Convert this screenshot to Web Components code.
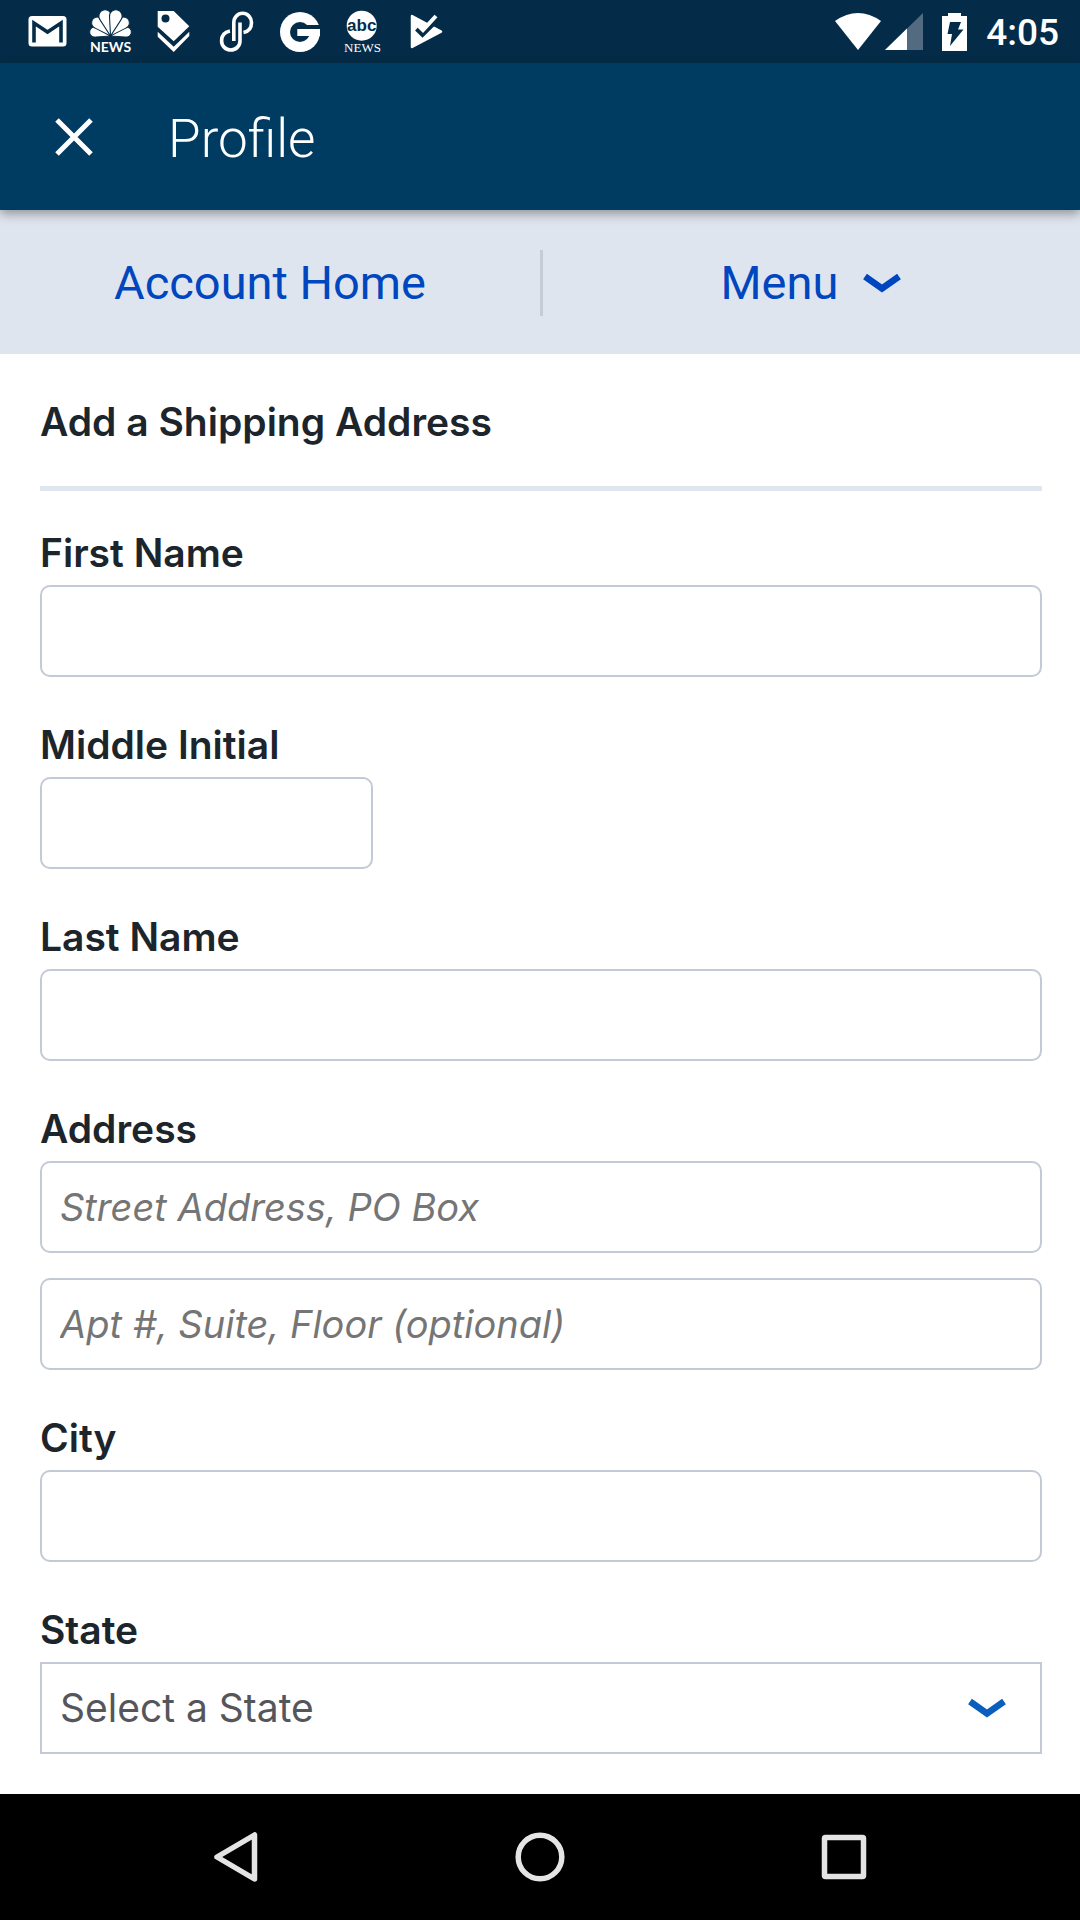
<!DOCTYPE html>
<html lang="en">
<head>
<meta charset="utf-8">
<meta name="viewport" content="width=device-width, initial-scale=1">
<title>Profile</title>
<style>
body { margin: 0; background: #fff; font-family: Inter, "Liberation Sans", sans-serif; color: #1d252c; }
</style>
</head>
<body>
<profile-screen></profile-screen>
<script>
const define = (name, html, setup) => customElements.define(name, class extends HTMLElement {
  constructor() {
    super();
    const t = document.createElement('template');
    t.innerHTML = html;
    this.attachShadow({ mode: 'open' }).append(t.content.cloneNode(true));
  }
  connectedCallback() { if (setup) setup(this, this.shadowRoot); }
});

define('status-bar', `
<style>
:host { display: flex; justify-content: space-between; align-items: center; height: 63px; padding: 0 21px 0 16px; background: #042c48; color: #fff; font: 500 37px/44px Roboto, sans-serif; }
div { display: flex; align-items: center; }
svg { display: block; flex: none; }
.sys { gap: 19px; }
.sys span { padding-top: 3px; }
.radio { gap: 4px; }
</style>
<div>
  <svg width="63" height="63" viewBox="0 0 63 63"><rect x="12.500" y="16" width="38" height="30.500" rx="3.500" fill="#fff"/><path d="M18 42.500V23L31.500 32 45 23V42.500" fill="none" stroke="#042c48" stroke-width="3.600"/></svg>
  <svg width="63" height="63" viewBox="0 0 63 63"><g fill="#fff" stroke="#042c48" stroke-width="1" transform="translate(31.500 36)"><path transform="rotate(-76) scale(.84)" d="M0 0L-5.500-17A6 6 0 1 1 5.500-17Z"/><path transform="rotate(76) scale(.84)" d="M0 0L-5.500-17A6 6 0 1 1 5.500-17Z"/><path transform="rotate(-45) scale(.96)" d="M0 0L-5.500-17A6 6 0 1 1 5.500-17Z"/><path transform="rotate(45) scale(.96)" d="M0 0L-5.500-17A6 6 0 1 1 5.500-17Z"/><path transform="rotate(-15) scale(1.060)" d="M0 0L-5.500-17A6 6 0 1 1 5.500-17Z"/><path transform="rotate(15) scale(1.060)" d="M0 0L-5.500-17A6 6 0 1 1 5.500-17Z"/></g><text x="31.500" y="52" text-anchor="middle" fill="#fff" font-family="Lato, sans-serif" font-weight="700" font-size="14">NEWS</text></svg>
  <svg width="63" height="63" viewBox="0 0 63 63"><path d="M15.700 11H31.700L47.300 26.300 31.700 41.300 15.700 26.700ZM15.700 31.700L31.700 46.700 47.300 31.700V36L31.700 52 15.700 36.700Z" fill="#fff"/><circle cx="23.500" cy="18.500" r="4" fill="#042c48"/></svg>
  <svg width="63" height="63" viewBox="0 0 63 63"><g fill="none" stroke="#fff" stroke-width="3.600"><path d="M28.800 41V22.500A8.600 9 0 0 1 46.500 22.500Q46.500 31 38.500 32.500"/><path d="M35 22.500V41A9.200 9 0 0 1 16.600 41Q16.600 32.500 25 31"/></g></svg>
  <svg width="63" height="63" viewBox="0 0 63 63"><circle cx="32" cy="32" r="20" fill="#fff"/><circle cx="32" cy="32" r="10" fill="#042c48"/><path d="M37 25H52.500V29H37Z" fill="#042c48"/><path d="M29.300 29H52V36H29.300Z" fill="#fff"/></svg>
  <svg width="63" height="63" viewBox="0 0 63 63"><circle cx="30.700" cy="25.700" r="15" fill="#fff"/><text x="30.700" y="30.500" text-anchor="middle" fill="#042c48" font-family="Liberation Sans, sans-serif" font-weight="700" font-size="17">abc</text><text x="31.500" y="52" text-anchor="middle" fill="#fff" font-family="Liberation Serif, serif" font-size="13">NEWS</text></svg>
  <svg width="63" height="63" viewBox="0 0 63 63"><path d="M18 16L47 31.700 18 47Z" fill="#fff" stroke="#fff" stroke-width="2.500" stroke-linejoin="round"/><path d="M34 10L48 12V26L34 24Z" fill="#042c48"/><path d="M22.500 29L28.500 35 44 19.500" fill="none" stroke="#042c48" stroke-width="4"/><path d="M25 26L29 30 42 16" fill="none" stroke="#fff" stroke-width="4"/></svg>
</div>
<div class="sys">
  <div class="radio">
    <svg width="46" height="37" viewBox="0 0 46 37"><path d="M0 8Q23-8 46 8L23 37Z" fill="#fff"/></svg>
    <svg width="38" height="37" viewBox="0 0 38 37"><path d="M38 0V37H0Z" fill="#526b80"/><path d="M22 15.500V37H0Z" fill="#fff"/></svg>
  </div>
  <svg width="25" height="38" viewBox="0 0 25 38"><path d="M6 0H19V3H25V38H0V3H6Z" fill="#fff"/><path d="M8 9H19L16 16.500H21.500L8 33 10 21H5.500Z" fill="#042c48"/></svg>
  <span>4:05</span>
</div>`);

define('app-bar', `
<style>
:host { display: flex; align-items: center; height: 147px; background: #003b62; color: #fff; position: relative; z-index: 1; box-shadow: 0 4px 10px rgba(0,0,0,.35); }
button { width: 147px; height: 147px; border: 0; padding: 0; background: none; color: inherit; display: grid; place-items: center; }
h1 { margin: 0 0 0 21px; padding-top: 4px; font: 300 53px/64px Roboto, sans-serif; }
</style>
<button aria-label="Close"><svg width="38" height="38" viewBox="0 0 38 38"><path d="M2 2L36 36M36 2L2 36" stroke="#fff" stroke-width="5"/></svg></button>
<h1><slot></slot></h1>`);

define('chevron-down', `
<style>:host { display: block; } svg { display: block; }</style>
<svg width="40" height="20" viewBox="0 0 40 20"><path d="M3 3.500L20 15.500 37 3.500" fill="none" stroke="currentColor" stroke-width="6.500"/></svg>`);

define('account-nav', `
<style>
:host { display: block; background: #dfe5ef; }
nav { display: flex; align-items: center; box-sizing: border-box; height: 144px; padding-top: 2px; }
a, button { flex: 1; display: flex; align-items: center; justify-content: center; gap: 24px; height: 100%; margin: 0; padding: 0; border: 0; background: none; color: #0046be; font: 400 47px/56px Roboto, sans-serif; text-decoration: none; }
a { flex: none; width: 50%; }
i { width: 3px; height: 66px; background: #c5cbd7; }
</style>
<nav aria-label="Account"><a href="#home">Account Home</a><i></i><button>Menu <chevron-down></chevron-down></button></nav>`);

const fieldStyle = `
:host { display: block; }
label { display: block; margin-bottom: 8px; font-size: 39px; line-height: 48px; font-weight: 600; }
input, select { display: block; box-sizing: border-box; width: 100%; height: 92px; margin: 0; padding: 0 18px; border: 2px solid #c3cad5; border-radius: 10px; background: #fff; color: #55565b; font: 400 38px/48px Inter, "Liberation Sans", sans-serif; appearance: none; outline: 0; }
input::placeholder { color: #757575; font-style: italic; opacity: 1; }`;

define('text-field', `
<style>${fieldStyle}
:host([short]) input { width: 333px; }
</style>
<label for="box"></label><input id="box" type="text">`, (el, root) => {
  const label = root.querySelector('label'), input = root.querySelector('input');
  if (el.hasAttribute('label')) label.textContent = el.getAttribute('label');
  else { label.remove(); input.setAttribute('aria-label', 'Address line 2'); }
  input.placeholder = el.getAttribute('placeholder') || '';
});

define('select-field', `
<style>${fieldStyle}
select { border-radius: 0; font-size: 39px; }
.wrap { display: grid; align-items: center; }
.wrap > * { grid-area: 1 / 1; }
chevron-down { justify-self: end; margin-right: 35px; color: #0a5ebd; pointer-events: none; }
</style>
<label for="box"></label><div class="wrap"><select id="box"><option></option></select><chevron-down></chevron-down></div>`, (el, root) => {
  root.querySelector('label').textContent = el.getAttribute('label');
  root.querySelector('option').textContent = el.getAttribute('prompt');
});

define('address-form', `
<style>
:host { display: block; padding: 44px 38px 40px 40px; }
h2 { margin: 0 0 38px; padding-bottom: 40px; border-bottom: 5px solid #dfe6f0; font-size: 39px; line-height: 48px; font-weight: 600; }
form { display: flex; flex-direction: column; gap: 44px; }
.pair { display: flex; flex-direction: column; gap: 25px; }
</style>
<h2>Add a Shipping Address</h2>
<form>
  <text-field label="First Name"></text-field>
  <text-field label="Middle Initial" short></text-field>
  <text-field label="Last Name"></text-field>
  <div class="pair">
    <text-field label="Address" placeholder="Street Address, PO Box"></text-field>
    <text-field placeholder="Apt #, Suite, Floor (optional)"></text-field>
  </div>
  <text-field label="City"></text-field>
  <select-field label="State" prompt="Select a State"></select-field>
</form>`);

define('system-nav', `
<style>
:host { display: flex; height: 126px; padding: 0 84px; background: #000; }
button { flex: 1; display: grid; place-items: center; border: 0; padding: 0; background: none; }
svg { fill: none; stroke: #e4e4e4; stroke-width: 5.500; stroke-linejoin: round; }
</style>
<button aria-label="Back"><svg width="50" height="50" viewBox="0 0 50 50"><path d="M43.500 3V47L6 25Z"/></svg></button>
<button aria-label="Home"><svg width="50" height="50" viewBox="0 0 50 50"><circle cx="25" cy="25" r="21.800"/></svg></button>
<button aria-label="Recent apps"><svg width="50" height="50" viewBox="0 0 50 50"><rect x="5.500" y="5.500" width="39" height="39" rx="1"/></svg></button>`);

define('profile-screen', `
<style>
:host { display: flex; flex-direction: column; min-height: 100vh; }
main { flex: 1; }
</style>
<status-bar></status-bar>
<app-bar>Profile</app-bar>
<account-nav></account-nav>
<main><address-form></address-form></main>
<system-nav></system-nav>`);
</script>
</body>
</html>
